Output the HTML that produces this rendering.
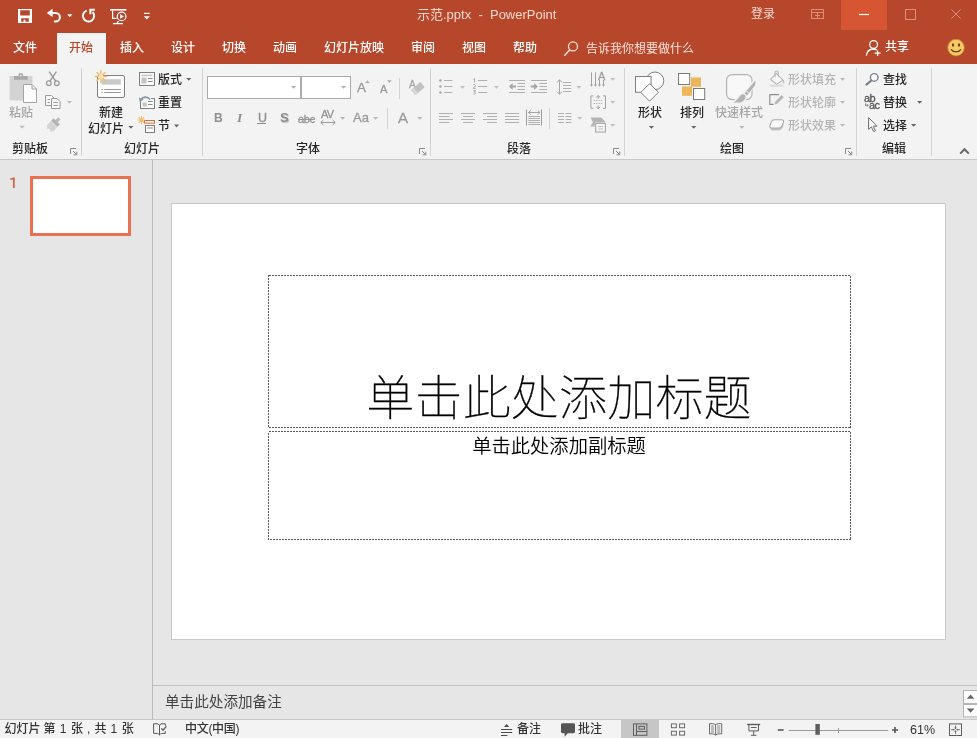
<!DOCTYPE html>
<html lang="zh-CN">
<head>
<meta charset="utf-8">
<title>示范.pptx - PowerPoint</title>
<style>
*{box-sizing:border-box;margin:0;padding:0}
html,body{width:977px;height:738px;overflow:hidden;background:#e6e6e6}
body{font-family:"Liberation Sans","Noto Sans CJK SC",sans-serif;font-size:12px;color:#262626;position:relative}
#titlebar{position:absolute;left:0;top:0;width:977px;height:64px;background:#b7472a}
#ribbon{position:absolute;left:0;top:64px;width:977px;height:96px;background:#f3f3f3;border-bottom:1px solid #c8c8c8}
#work{position:absolute;left:0;top:160px;width:977px;height:559px;background:#e6e6e6}
#status{position:absolute;left:0;top:719px;width:977px;height:19px;background:#f3f3f3;box-shadow:inset 0 1px 0 #c8c8c8}
.t{position:absolute;white-space:nowrap;height:16px;line-height:16px;font-size:12px;will-change:transform}
.w{color:#fff;font-weight:500}
.d{color:#262626;font-weight:500}
.g{color:#a6a6a6;font-weight:500}
.lg{color:#b4b4b4;font-weight:500}
svg{position:absolute;overflow:visible}
.sep{position:absolute;width:1px;background:#d2d2d2}
</style>
</head>
<body>
<!--TITLEBAR-->
<div id="titlebar">
<div style="position:absolute;left:841px;top:0;width:46px;height:30px;background:#d65532"></div>
<div style="position:absolute;left:57px;top:33px;width:49px;height:31px;background:#f3f3f3"></div>
<div class="t" id="ttl" style="left:417px;top:7px;font-size:13px;color:#f6d9d0">示范.pptx&nbsp; -&nbsp; PowerPoint</div>
<div class="t" style="left:751px;top:6px;color:#f6d9d0">登录</div>
<div class="t w" style="left:13px;top:40px">文件</div>
<div class="t" style="left:69px;top:40px;color:#b7472a;font-weight:500">开始</div>
<div class="t w" style="left:120px;top:40px">插入</div>
<div class="t w" style="left:171px;top:40px">设计</div>
<div class="t w" style="left:222px;top:40px">切换</div>
<div class="t w" style="left:273px;top:40px">动画</div>
<div class="t w" style="left:324px;top:40px">幻灯片放映</div>
<div class="t w" style="left:411px;top:40px">审阅</div>
<div class="t w" style="left:462px;top:40px">视图</div>
<div class="t w" style="left:513px;top:40px">帮助</div>
<div class="t" style="left:586px;top:41px;color:#fbe4dc">告诉我你想要做什么</div>
<div class="t w" style="left:885px;top:39px">共享</div>
<!--TITLEICONS-->
<svg width="977" height="64" viewBox="0 0 977 64" style="left:0;top:0" fill="none" stroke="none">
<!-- save -->
<path fill="#fff" fill-rule="evenodd" d="M18 9h14v14h-14z M20.2 10.2v5.2h9.6v-5.2z M21.2 18.2v3.6h7.6v-3.6z"/>
<path fill="#fff" d="M23.6 19.7h1.9v2.2h-1.9z"/>
<!-- undo -->
<path fill="#fff" d="M46.8 12.9 L52.6 8.8 V17 Z"/>
<path stroke="#fff" stroke-width="2" stroke-linecap="round" d="M52 12.9 H55.6 A4.3 4.3 0 0 1 55.6 21.5 H54.8"/>
<path fill="#fff" d="M67.2 14.2h5.2l-2.6 3z"/>
<!-- redo -->
<path stroke="#fff" stroke-width="1.9" d="M86.6 10.6 A5.6 5.6 0 1 0 92.6 12"/>
<path fill="#fff" d="M89.4 8.8 H94.8 V10.8 H91.4 V14.2 H89.4 Z"/>
<!-- present -->
<path stroke="#fff" stroke-width="1.6" d="M110 9.8 H126.4"/>
<path stroke="#fff" stroke-width="1.2" d="M112.6 10.5 V18.4 H116.6 M118.6 21 L116.8 23.4 M113 23.6 H123"/>
<circle cx="121.6" cy="16.4" r="4.3" stroke="#fff" stroke-width="1.2"/>
<path fill="#fff" d="M120.2 14v4.8l3.7-2.4z"/>
<!-- customize -->
<path stroke="#fff" stroke-width="1.2" d="M144 13.4 H149.6"/>
<path fill="#fff" d="M143.8 16.2h6l-3 3.2z"/>
<!-- search -->
<circle cx="573" cy="46.4" r="4.5" stroke="#fbe0d6" stroke-width="1.3"/>
<path stroke="#fbe0d6" stroke-width="1.5" stroke-linecap="round" d="M569.8 49.8 L564.8 55.2"/>
<!-- share -->
<circle cx="873.6" cy="44.5" r="3.9" stroke="#fff" stroke-width="1.3"/>
<path stroke="#fff" stroke-width="1.3" d="M866.4 55.6 C866.8 51.4 869.6 49.2 873.2 49 C874.8 49 876 49.4 877 50 M877.6 50.4 V56 M874.6 53.2 H880.6"/>
<!-- smiley -->
<circle cx="956" cy="47.6" r="8.3" fill="#f7c863" stroke="#c9893a" stroke-width="0.8"/>
<ellipse cx="953" cy="45" rx="1.1" ry="1.8" fill="#5a4320"/>
<ellipse cx="959" cy="45" rx="1.1" ry="1.8" fill="#5a4320"/>
<path stroke="#5a4320" stroke-width="1.3" stroke-linecap="round" d="M951.4 49.6 C953.4 52.6 958.6 52.6 960.6 49.6"/>
<!-- window controls -->
<g stroke="#d98f7a" stroke-width="1">
<rect x="811.5" y="9.5" width="12" height="9"/>
<path d="M811.5 12.5 H823.5 M817.5 12.5 V18.5 M815 15.5 H820"/>
<rect x="905.5" y="9.5" width="10" height="10"/>
<path d="M951.3 9.3 L960.7 18.7 M960.7 9.3 L951.3 18.7"/>
</g>
<path stroke="#fff" stroke-width="1.2" d="M859 14.5 H869"/>
</svg>
<!--/TITLEICONS-->
</div>
<!--RIBBON-->
<div id="ribbon">
<div class="sep" style="left:81px;top:4px;height:88px"></div>
<div class="sep" style="left:202px;top:4px;height:88px"></div>
<div class="sep" style="left:430px;top:4px;height:88px"></div>
<div class="sep" style="left:624px;top:4px;height:88px"></div>
<div class="sep" style="left:856px;top:4px;height:88px"></div>
<div class="sep" style="left:931px;top:4px;height:88px"></div>
<div class="sep" style="left:399px;top:14px;height:21px"></div>
<div class="sep" style="left:387px;top:44px;height:21px"></div>
<div class="sep" style="left:549px;top:44px;height:21px"></div>
<!-- group labels -->
<div class="t d" style="left:12px;top:77px">剪贴板</div>
<div class="t d" style="left:124px;top:77px">幻灯片</div>
<div class="t d" style="left:296px;top:77px">字体</div>
<div class="t d" style="left:507px;top:77px">段落</div>
<div class="t d" style="left:720px;top:77px">绘图</div>
<div class="t d" style="left:882px;top:77px">编辑</div>
<!-- clipboard -->
<div class="t g" style="left:9px;top:41px">粘贴</div>
<!-- slides -->
<div class="t d" style="left:99px;top:41px">新建</div>
<div class="t d" style="left:88px;top:56.5px">幻灯片</div>
<div class="t d" style="left:158px;top:8px">版式</div>
<div class="t d" style="left:158px;top:31px">重置</div>
<div class="t d" style="left:158px;top:54px">节</div>
<!-- font -->
<div style="position:absolute;left:207px;top:12px;width:94px;height:23px;background:#fff;border:1px solid #ababab"></div>
<div style="position:absolute;left:301px;top:12px;width:50px;height:23px;background:#fff;border:1px solid #ababab"></div>
<!-- font letters -->
<div class="t" id="fB" style="left:213.5px;top:46px;font-weight:bold;font-size:12px;color:#8f8f8f">B</div>
<div class="t" id="fI" style="left:236.5px;top:46px;font-family:'Liberation Serif',serif;font-style:italic;font-weight:bold;font-size:13.5px;color:#8f8f8f">I</div>
<div class="t" id="fU" style="left:257.5px;top:46px;font-size:12.5px;color:#8f8f8f;-webkit-text-stroke:0.3px #8f8f8f">U</div>
<div id="fUl" style="position:absolute;left:257px;top:59px;width:9px;height:1px;background:#8f8f8f"></div>
<div class="t" id="fS" style="left:280px;top:46px;font-weight:bold;font-size:13px;color:#8f8f8f;text-shadow:1px 1px 1px #bbb">S</div>
<div class="t" id="fabc" style="left:298px;top:47px;font-size:11px;color:#959595;text-decoration:line-through;letter-spacing:-0.3px;-webkit-text-stroke:0.3px #959595">abc</div>
<div class="t" id="fAV" style="left:320.5px;top:42px;font-size:11px;color:#959595;letter-spacing:-0.8px;-webkit-text-stroke:0.3px #959595">AV</div>
<div class="t" id="fAa" style="left:353px;top:46px;font-size:13px;color:#9a9a9a;-webkit-text-stroke:0.3px #9a9a9a">Aa</div>
<div class="t" id="fA" style="left:398px;top:46px;font-size:15px;color:#9a9a9a;-webkit-text-stroke:0.3px #9a9a9a">A</div>
<div class="t" id="fAg" style="left:357px;top:16px;font-size:13.5px;color:#9a9a9a;-webkit-text-stroke:0.3px #9a9a9a">A</div>
<div class="t" id="fAs" style="left:380px;top:17px;font-size:11px;color:#9a9a9a;-webkit-text-stroke:0.3px #9a9a9a">A</div>
<div class="t" id="fAc" style="left:408.5px;top:13px;font-size:10px;color:#a4a4a4;-webkit-text-stroke:0.3px #a4a4a4">A</div>
<div class="t" id="pA" style="left:598px;top:3.5px;font-size:11px;color:#a0a0a0;-webkit-text-stroke:0.3px #a0a0a0">A</div>
<!-- drawing -->
<div class="t d" style="left:638px;top:41px">形状</div>
<div class="t d" style="left:680px;top:41px">排列</div>
<div class="t g" style="left:715px;top:41px">快速样式</div>
<div class="t lg" style="left:788px;top:8px">形状填充</div>
<div class="t lg" style="left:788px;top:31px">形状轮廓</div>
<div class="t lg" style="left:788px;top:54px">形状效果</div>
<div class="t" id="eab" style="left:863.8px;top:26px;font-size:11px;color:#555;letter-spacing:-0.5px;-webkit-text-stroke:0.3px #555">ab</div>
<div class="t" id="eac" style="left:869.2px;top:33px;font-size:11px;color:#555;letter-spacing:-0.5px;-webkit-text-stroke:0.3px #555">ac</div>
<!-- editing -->
<div class="t d" style="left:883px;top:8px">查找</div>
<div class="t d" style="left:883px;top:31px">替换</div>
<div class="t d" style="left:883px;top:54px">选择</div>
<!--RIBBONICONS-->
<svg width="977" height="96" viewBox="0 64 977 96" style="left:0;top:0" fill="none" stroke="none">
<!-- ===== clipboard ===== -->
<g>
<rect x="9.5" y="76" width="23" height="24.5" fill="#d3d3d3"/>
<path fill="#a8a8a8" d="M14 76 H18.4 V75.4 A2.4 2.4 0 0 1 23.2 75.4 V76 H27.6 V79.8 H14 Z"/>
<circle cx="20.8" cy="75.6" r="0.9" fill="#f3f3f3"/>
<path fill="#fcfcfc" stroke="#a4a4a4" stroke-width="1" d="M23.5 84.5 H32 L36.5 89 V102.5 H23.5 Z"/>
<path stroke="#a4a4a4" stroke-width="1" d="M32 84.5 V89 H36.5"/>
<!-- scissors -->
<g stroke="#9c9c9c" stroke-width="1.3">
<circle cx="48.8" cy="83.2" r="2.3"/>
<circle cx="56.8" cy="83.2" r="2.3"/>
<path stroke-width="1.5" d="M49.9 81.2 L56.4 71.6 M55.7 81.2 L49.2 71.6"/>
</g>
<!-- copy -->
<g stroke="#9a9a9a" stroke-width="1" fill="#f8f8f8">
<path d="M45.5 95.5 H51.5 L54.5 98.5 V105.5 H45.5 Z"/>
<path d="M51.5 98.5 H57 L60 101.5 V108.5 H51.5 Z"/>
<path fill="none" d="M47.5 99.5 H50 M47.5 102.5 H50 M53.5 102.5 H58 M53.5 105.5 H58"/>
</g>
<path fill="#bcbcbc" d="M66.6 101h5.4l-2.7 2.8z"/>
<!-- format painter -->
<g transform="translate(53.6 124.6) rotate(42)">
<rect x="-1.6" y="-8.6" width="3.2" height="4.2" fill="#bdbdbd"/>
<rect x="-4.4" y="-4.6" width="8.8" height="3.6" fill="#b3b3b3"/>
<path fill="#d4d4d4" d="M-4.4 -0.6 H4.4 V5 L2 7.4 L0 5.6 L-2 7.4 L-4.4 5 Z"/>
</g>
<path fill="#bcbcbc" d="M19.4 125.8h5.4l-2.7 2.8z"/>
<!-- dialog launcher -->
<path stroke="#8a8a8a" stroke-width="1" d="M70.5 154 V148.5 H76 M73 151 L76.5 154.5 M76.8 151.6 V154.8 H73.6"/>
</g>
<!-- ===== slides ===== -->
<g>
<rect x="97.5" y="75.5" width="27" height="22" rx="1.5" fill="#fdfdfd" stroke="#7f7f7f"/>
<rect x="101.6" y="79.2" width="19.2" height="5.4" fill="#c9c9c9"/>
<path stroke="#9a9a9a" stroke-width="1" d="M101.4 89.5 H102.8 M104.2 89.5 H120.8 M101.4 92.5 H102.8 M104.2 92.5 H120.8"/>
<g stroke="#f0bc6c" stroke-width="1.5" stroke-linecap="round">
<path d="M101 70.8 V82.4 M95.2 76.6 H106.8 M96.9 72.5 L105.1 80.7 M105.1 72.5 L96.9 80.7"/>
</g>
<circle cx="101" cy="76.6" r="2.3" fill="#fbe3b5"/>
<path fill="#666" d="M128.3 126h5.2l-2.6 2.8z"/>
<!-- layout -->
<rect x="139.5" y="72.5" width="15" height="13" fill="#fcfcfc" stroke="#7f7f7f"/>
<rect x="141.5" y="74.6" width="11" height="1.6" fill="#c4c4c4"/>
<rect x="141.5" y="77.6" width="5" height="6" fill="#c4c4c4"/>
<path stroke="#8c8c8c" d="M148 78.5 H152.6 M148 81.5 H152.6"/>
<path fill="#666" d="M186.2 78h5.2l-2.6 2.8z"/>
<!-- reset -->
<rect x="140.5" y="98.5" width="14" height="10" fill="#fcfcfc" stroke="#7f7f7f"/>
<rect x="142.6" y="102.5" width="4" height="4" fill="#c4c4c4"/>
<path stroke="#8c8c8c" d="M148 101.5 H152.6 M148 104.5 H152.6"/>
<path stroke="#f3f3f3" stroke-width="3.6" d="M141 100.6 C141.6 96.6 147.6 95.6 150 99.4"/>
<path stroke="#8a9bb0" stroke-width="1.7" d="M141 100.4 C141.8 96.6 147.6 95.8 150 99.6"/>
<path fill="#8a9bb0" d="M138.8 97.6 L143.6 99.4 L139.8 102.6 Z"/>
<!-- section -->
<rect x="145.5" y="125.5" width="9" height="7" fill="#fcfcfc" stroke="#7f7f7f"/>
<rect x="147" y="127" width="6" height="2" fill="#c4c4c4"/>
<rect x="144.5" y="120.5" width="10" height="2.6" fill="#fcfcfc" stroke="#d2693e"/>
<g stroke="#f0bc6c" stroke-width="1.1" stroke-linecap="round">
<path d="M141.4 116.6 V123.4 M138 120 H144.8 M139 117.6 L143.8 122.4 M143.8 117.6 L139 122.4"/>
</g>
<path fill="#666" d="M174 124.6h5.2l-2.6 2.8z"/>
</g>
<!-- ===== font ===== -->
<g>
<path fill="#b0b0b0" d="M291 86h5.2l-2.6 2.8z M341 86h5.2l-2.6 2.8z"/>
<path fill="#b0b0b0" d="M365 83 h4.8 l-2.4 -2.8z"/>
<path fill="#b0b0b0" d="M387 80.2 h4.8 l-2.4 2.8z"/>
<!-- eraser -->
<g transform="translate(417.8 88.6) rotate(-40)">
<rect x="-6.2" y="-3.4" width="12.4" height="6.8" rx="0.8" fill="#c2c2c2"/>
<rect x="-6.2" y="-3.4" width="3.6" height="6.8" rx="0.8" fill="#d8d8d8"/>
</g>
<!-- AV arrows -->
<path stroke="#9a9a9a" stroke-width="1" d="M321 122.5 H335 M323.4 120 L320.8 122.5 L323.4 125 M332.6 120 L335.2 122.5 L332.6 125"/>
<path fill="#b8b8b8" d="M340 117h5.2l-2.6 2.8z M373 117h5.2l-2.6 2.8z M417.2 117h5.2l-2.6 2.8z"/>
<path transform="translate(349 0)" stroke="#8a8a8a" stroke-width="1" d="M70.5 154 V148.5 H76 M73 151 L76.5 154.5 M76.8 151.6 V154.8 H73.6"/>
</g>
<!-- ===== paragraph ===== -->
<g>
<path stroke="#b0b0b0" stroke-width="1" d="M444 80.5 H452.4 M444 86.5 H452.4 M444 92.5 H452.4 M478 80.5 H487.2 M478 86.5 H487.2 M478 92.5 H487.2 M509 80.5 H525 M509 92.5 H525 M517.4 83.5 H525 M517.4 86.5 H525 M517.4 89.5 H525 M531 80.5 H547 M531 92.5 H547 M539.4 83.5 H547 M539.4 86.5 H547 M539.4 89.5 H547 M563 82.5 H571.2 M563 85.5 H571.2 M563 88.5 H571.2 M563 91.5 H571.2 M439 113.5 H453 M439 116.5 H449.4 M439 119.5 H453 M439 122.5 H449.4 M461 113.5 H475 M463 116.5 H473 M461 119.5 H475 M463 122.5 H473 M483 113.5 H497 M487 116.5 H497 M483 119.5 H497 M487 122.5 H497 M505 113.5 H519.2 M505 116.5 H519.2 M505 119.5 H519.2 M505 122.5 H519.2 M528.4 116.5 H540 M528.4 118.5 H540 M528.4 120.5 H540 M528.4 122.5 H540 M528.4 124.5 H540 M558 113.5 H564 M558 116.5 H564 M558 119.5 H564 M558 122.5 H564 M565.6 113.5 H571.4 M565.6 116.5 H571.4 M565.6 119.5 H571.4 M565.6 122.5 H571.4 "/>
<g fill="#a6a6a6"><circle cx="440.4" cy="80.5" r="1.2"/><circle cx="440.4" cy="86.5" r="1.2"/><circle cx="440.4" cy="92.5" r="1.2"/></g>
<g stroke="#a0a0a0" stroke-width="0.9"><path d="M473.4 79.4 L474.6 78.6 V82.4 M473.4 84.8 C474.4 84 475.8 84.6 475.4 85.8 L473.4 88.4 H475.8 M473.4 90.6 H475.6 L474.4 92.2 C476 92.2 476 94.4 473.4 94.2"/></g>
<path fill="#c0c0c0" d="M460 86h5l-2.5 2.7z M494 86h5l-2.5 2.7z M576.4 86h5l-2.5 2.7z M577.2 117h5l-2.5 2.7z M610.2 78h5l-2.5 2.7z M610.2 101h5l-2.5 2.7z M610.2 124h5l-2.5 2.7z"/>
<!-- indent arrows -->
<path fill="#a6a6a6" d="M508.8 86.5 L512.6 83 V85.4 H516 V87.6 H512.6 V90 Z M537.8 86.5 L534 83 V85.4 H530.8 V87.6 H534 V90 Z"/>
<!-- line spacing arrows -->
<path stroke="#a6a6a6" stroke-width="1" d="M559.5 80 V94 M557 82.4 L559.5 79.6 L562 82.4 M557 91.6 L559.5 94.4 L562 91.6"/>
<!-- distributed -->
<path stroke="#9a9a9a" stroke-width="1" d="M526.5 109.5 V125.5 M541.5 109.5 V125.5"/>
<path stroke="#a6a6a6" stroke-width="1" d="M528.6 112.5 H539.8 M530.8 110.4 L528.4 112.5 L530.8 114.6 M537.6 110.4 L540 112.5 L537.6 114.6"/>
<!-- text direction -->
<path stroke="#a0a0a0" stroke-width="1" d="M591.5 72.4 V86 M595.5 72.4 V86 M599.5 80 V86 M603.5 80 V86"/>
<path fill="#a0a0a0" d="M590 84.6 h3 l-1.5 2.2z M594 84.6 h3 l-1.5 2.2z M598 84.6 h3 l-1.5 2.2z M602 84.6 h3 l-1.5 2.2z"/>
<!-- align text -->
<path stroke="#a0a0a0" stroke-width="1" d="M593.4 95.9 H590.9 V108.3 H593.4 M603 95.9 H605.5 V108.3 H603 M598.2 95.6 V98.8 M598.2 105.4 V108.6 M596.4 97.4 L598.2 95.4 L600 97.4 M596.4 106.8 L598.2 108.8 L600 106.8"/>
<path stroke="#b4b4b4" stroke-width="1" stroke-dasharray="1.4 1" d="M593.6 100.5 H602.8 M593.6 103.5 H602.8"/>
<!-- smartart -->
<path fill="#b4b4b4" d="M590.6 117.6 H601.4 L605 121.4 V122.6 H594.8 V126.6 H590.2 L593 122.2 Z"/>
<rect x="595.6" y="123.4" width="9.8" height="8.6" fill="#f6f6f6" stroke="#a8a8a8" stroke-width="1.1"/>
<path stroke="#b8b8b8" stroke-width="0.9" d="M598 126.5 H603 M598 129 H603"/>
<path transform="translate(543 0)" stroke="#8a8a8a" stroke-width="1" d="M70.5 154 V148.5 H76 M73 151 L76.5 154.5 M76.8 151.6 V154.8 H73.6"/>
</g>
<!-- ===== drawing ===== -->
<g>
<circle cx="655" cy="80.8" r="8.8" fill="#fcfcfc" stroke="#808080"/>
<rect x="635.5" y="76.5" width="15.6" height="15.8" fill="#fcfcfc" stroke="#808080"/>
<path fill="#fcfcfc" stroke="#808080" d="M649.6 83.6 L658.4 92.4 L649.6 101.2 L640.8 92.4 Z"/>
<path fill="#666" d="M648.8 126h5.2l-2.6 2.8z M691.2 126h5.2l-2.6 2.8z"/>
<!-- arrange -->
<rect x="691" y="77.4" width="10" height="9.4" fill="#edb65c"/>
<rect x="682" y="86.4" width="10" height="9.4" fill="#edb65c"/>
<rect x="678.5" y="73.5" width="11.2" height="11" fill="#fdfdfd" stroke="#7a7a7a"/>
<rect x="693.5" y="88.5" width="11.2" height="11" fill="#fdfdfd" stroke="#7a7a7a"/>
<!-- quick styles -->
<rect x="726.6" y="74.6" width="25.4" height="25" rx="5.5" fill="#f8f8f8" stroke="#b4b4b4" stroke-width="1.2"/>
<path fill="#f3f3f3" d="M731 103.5 L742 92 L755 79 L757.5 82 L748 96 L744 103.5 Z"/>
<path fill="#b2b2b2" d="M733.4 102.4 C736.8 100.6 738.6 97.6 740.4 95.4 C742.4 93.6 744.6 94.4 745.4 96 C745.8 98.6 744 101.4 740.6 102.4 Z"/>
<path fill="#b2b2b2" d="M744.6 93.2 L753.6 82.6 L755.4 80.6 L755.2 85 L747 95.6 Z"/>
<path stroke="#f3f3f3" stroke-width="0.9" d="M746.4 91.2 L749.2 93.2"/>
<path fill="#b8b8b8" d="M739.2 126h5.2l-2.6 2.8z M840 78h5l-2.5 2.7z M840 101h5l-2.5 2.7z M840 124h5l-2.5 2.7z"/>
<!-- shape fill -->
<path fill="#f8f8f8" stroke="#b4b4b4" stroke-width="1.1" d="M776.4 73.6 L783 80.2 L776.6 84.4 L770.6 79.2 Z"/>
<path stroke="#b4b4b4" stroke-width="1.1" d="M775 77 V72.6 A1.6 1.6 0 0 1 778.2 72.6 V75.4"/>
<path fill="#b8b8b8" d="M782.4 79 C784.4 81 785 82.6 784 84 C783 82.6 782.6 81 782.4 79 Z"/>
<rect x="770" y="84.6" width="13.6" height="2.2" fill="#dcdcdc"/>
<!-- shape outline -->
<path stroke="#8e8e8e" stroke-width="1.1" d="M779 94.6 H769.8 V104.4 H773.4"/>
<path fill="#b8b8b8" d="M774.2 104.8 L775.4 101.4 L781.6 95 L783.8 97.2 L777.6 103.6 Z"/>
<!-- shape effects -->
<path fill="#c2c2c2" d="M770.4 127 C770 129 771 130.4 773 130.6 H778.6 C780.6 130.4 781.8 129.4 782.6 127.6 L784 123.4 L782 126.4 L772 128 Z"/>
<path fill="#fafafa" stroke="#a8a8a8" stroke-width="1.1" d="M774.4 119.8 H781.6 C783.4 119.8 784 121 783.4 122.6 L782 126 C781.4 127.4 780.4 128 779 128 H771.8 C770 128 769.4 126.8 770 125.2 L771.4 121.8 C772 120.4 773 119.8 774.4 119.8 Z"/>
<path transform="translate(775 0)" stroke="#8a8a8a" stroke-width="1" d="M70.5 154 V148.5 H76 M73 151 L76.5 154.5 M76.8 151.6 V154.8 H73.6"/>
</g>
<!-- ===== editing ===== -->
<g>
<circle cx="874.2" cy="77.4" r="3.8" fill="#fbfbfb" stroke="#7c8190" stroke-width="1.4"/>
<path stroke="#7c8190" stroke-width="2.1" stroke-linecap="round" d="M871.2 80.6 L866.4 84.6"/>
<path stroke="#777" stroke-width="0.9" d="M865.4 103.4 V105.4 H868 M866.8 104.2 L868.2 105.4 L866.8 106.6"/>
<path fill="#fcfcfc" stroke="#6c6c6c" stroke-width="1" d="M868.6 117.6 V129.4 L871.4 126.8 L873.6 131.6 L875.4 130.8 L873.2 126.2 H877 Z"/>
<path fill="#666" d="M917 101h5.2l-2.6 2.8z M911 124h5.2l-2.6 2.8z"/>
<path stroke="#666" stroke-width="2" d="M960.2 153.6 L964.5 149.2 L968.8 153.6"/>
</g>
<!--R6-->
</svg>
<!--/RIBBONICONS-->
</div>
<!--WORK-->
<div id="work">
<div style="position:absolute;left:152px;top:0;width:1px;height:559px;background:#bcbcbc"></div>
<div style="position:absolute;left:153px;top:525px;width:824px;height:1px;background:#c0c0c0"></div>
<div class="t" id="n1" style="left:9px;top:15px;font-size:14px;color:#cc5a3c;font-family:IPAPGothic,IPAGothic,NanumGothic,sans-serif;-webkit-text-stroke:0.4px #cc5a3c">1</div>
<div style="position:absolute;left:30px;top:16px;width:101px;height:60px;background:#fff;border:3px solid #e8714f"></div>
<div id="slide" style="position:absolute;left:171px;top:43px;width:775px;height:437px;background:#fff;border:1px solid #c9c9c9">
<div style="position:absolute;left:95px;top:159px;width:584px;text-align:center;font-size:48.2px;line-height:70px;height:70px;font-weight:100;-webkit-text-stroke:0.3px #000;color:#000;white-space:nowrap;will-change:transform">单击此处添加标题</div>
<div style="position:absolute;left:94.5px;top:229px;width:584px;text-align:center;font-size:19.3px;line-height:28px;height:28px;color:#000;white-space:nowrap;font-weight:350;will-change:transform">单击此处添加副标题</div>
</div>
<div class="t" style="left:165px;top:532px;font-size:14.6px;height:20px;line-height:20px;color:#444">单击此处添加备注</div>
<!--WORKICONS-->
<svg width="977" height="559" viewBox="0 160 977 559" style="left:0;top:0" fill="none" stroke="none">
<rect x="963.5" y="690.5" width="14" height="13" fill="#fdfdfd" stroke="#b4b4b4"/>
<rect x="963.5" y="704.5" width="14" height="12.4" fill="#fdfdfd" stroke="#b4b4b4"/>
<path fill="#666" d="M966.8 698.8 h7.6 l-3.8 -4.2z M966.8 708.6 h7.6 l-3.8 4.2z"/>
<rect x="268.5" y="275.5" width="582" height="152" stroke="#5a5a5a" stroke-width="1" stroke-dasharray="2 1" shape-rendering="crispEdges"/>
<rect x="268.5" y="431.5" width="582" height="108" stroke="#5a5a5a" stroke-width="1" stroke-dasharray="2 1" shape-rendering="crispEdges"/>
</svg>
<!--/WORKICONS-->
</div>
<!--STATUS-->
<div id="status">
<div style="position:absolute;left:621px;top:0;width:38px;height:19px;background:#c6c6c6"></div>
<div class="t d" id="st1" style="left:0;top:2px;width:140px;color:#333"><span style="position:absolute;left:4.6px">幻灯片 </span><span style="position:absolute;left:43.4px">第 </span><span style="position:absolute;left:59.8px">1 </span><span style="position:absolute;left:71px">张 </span><span style="position:absolute;left:87px">, </span><span style="position:absolute;left:94.4px">共 </span><span style="position:absolute;left:110.6px">1 </span><span style="position:absolute;left:121.8px">张</span></div>
<div class="t d" id="st2" style="left:185px;top:2px;color:#333;letter-spacing:-0.3px">中文(中国)</div>
<div class="t d" style="left:517px;top:2px;color:#333">备注</div>
<div class="t d" style="left:578px;top:2px;color:#333">批注</div>
<div class="t" id="zp" style="left:910px;top:3px;color:#333;font-size:12.5px">61%</div>
<!--STATUSICONS-->
<svg width="977" height="19" viewBox="0 719 977 19" style="left:0;top:0" fill="none" stroke="none">
<!-- spell check -->
<path stroke="#5a5a5a" stroke-width="1" d="M157.6 723.8 H153.6 V733.4 H157.8 M157.4 723.6 L159.5 725.2 L161.6 723.6 M161.2 723.8 H165.3 V726 M165.3 731 V733.4 H161.2 M159.5 725 V735"/>
<path fill="#5a5a5a" d="M158 733.6 h3 l-1.5 2.2z"/>
<path stroke="#5a5a5a" stroke-width="1.3" d="M161.4 728.4 L163 730.2 L166.4 726.4"/>
<!-- notes -->
<path fill="#4a4a4a" d="M504 727 h5.2 l-2.6 -3z"/>
<path stroke="#4a4a4a" stroke-width="1" d="M501 729.5 H512.2 M501 732.5 H512.2 M501 735.5 H507.4"/>
<!-- comment -->
<path fill="#555" d="M562.4 723.2 H573.6 A1.4 1.4 0 0 1 575 724.6 V731.8 A1.4 1.4 0 0 1 573.6 733.2 H567.8 L564.6 736.8 V733.2 H562.4 A1.4 1.4 0 0 1 561 731.8 V724.6 A1.4 1.4 0 0 1 562.4 723.2 Z"/>
<!-- normal view -->
<g stroke="#5e5e5e" stroke-width="1">
<rect x="633.5" y="723.9" width="13.4" height="11.4"/>
<path d="M636.5 724 V735.2 M636.6 731.5 H646.8"/>
<rect x="638.9" y="726.4" width="5.6" height="2.8"/>
</g>
<!-- sorter -->
<g stroke="#6a6a6a" stroke-width="1">
<rect x="671.4" y="723.9" width="5" height="3.8"/><rect x="679.6" y="723.9" width="5" height="3.8"/>
<rect x="671.4" y="731.3" width="5" height="3.8"/><rect x="679.6" y="731.3" width="5" height="3.8"/>
</g>
<!-- reading -->
<g stroke="#6a6a6a" stroke-width="1">
<path d="M715.6 724.6 V735.4 M715.6 724.6 C714 723.6 711.4 723.4 709.5 723.7 V733.9 C711.4 733.6 714 733.8 715.6 734.9 C717.2 733.8 719.8 733.6 721.7 733.9 V723.7 C719.8 723.4 717.2 723.6 715.6 724.6"/>
<path stroke-width="0.8" d="M711 726 H714 M711 728 H714 M711 730 H714 M711 732 H714 M717.2 726 H720.2 M717.2 728 H720.2 M717.2 730 H720.2 M717.2 732 H720.2"/>
</g>
<!-- slideshow -->
<g stroke="#5e5e5e" stroke-width="1">
<path stroke-width="1.4" d="M747.2 724.5 H760.2"/>
<path d="M748.9 725 V730.9 H758.5 V725 M750.8 727.5 H756.6 M753.7 731 V735 M751 735.3 H756.4"/>
</g>
<!-- zoom -->
<path stroke="#555" stroke-width="1.6" d="M777.8 730 H783.6"/>
<path stroke="#555" stroke-width="1.6" d="M892 730 H898 M895 727 V733"/>
<path stroke="#9a9a9a" stroke-width="1" d="M788.6 730.5 H888.2 M838.5 728 V733"/>
<rect x="815.4" y="724" width="4.4" height="10.8" fill="#5e5e5e"/>
<!-- fit -->
<g stroke="#5e5e5e" stroke-width="1">
<rect x="949.5" y="723.9" width="12" height="11.6"/>
<path stroke-width="0.9" d="M955.5 725.6 V728.4 M955.5 731 V733.8 M951.2 729.7 H954 M957 729.7 H959.8"/>
</g>
<path fill="#5e5e5e" d="M954.3 727.6 h2.4 l-1.2 1.6z M954.3 731.8 h2.4 l-1.2 -1.6z M953.4 728.5 v2.4 l1.4 -1.2z M957.6 728.5 v2.4 l-1.4 -1.2z"/>
</svg>
<!--/STATUSICONS-->
</div>
</body>
</html>
